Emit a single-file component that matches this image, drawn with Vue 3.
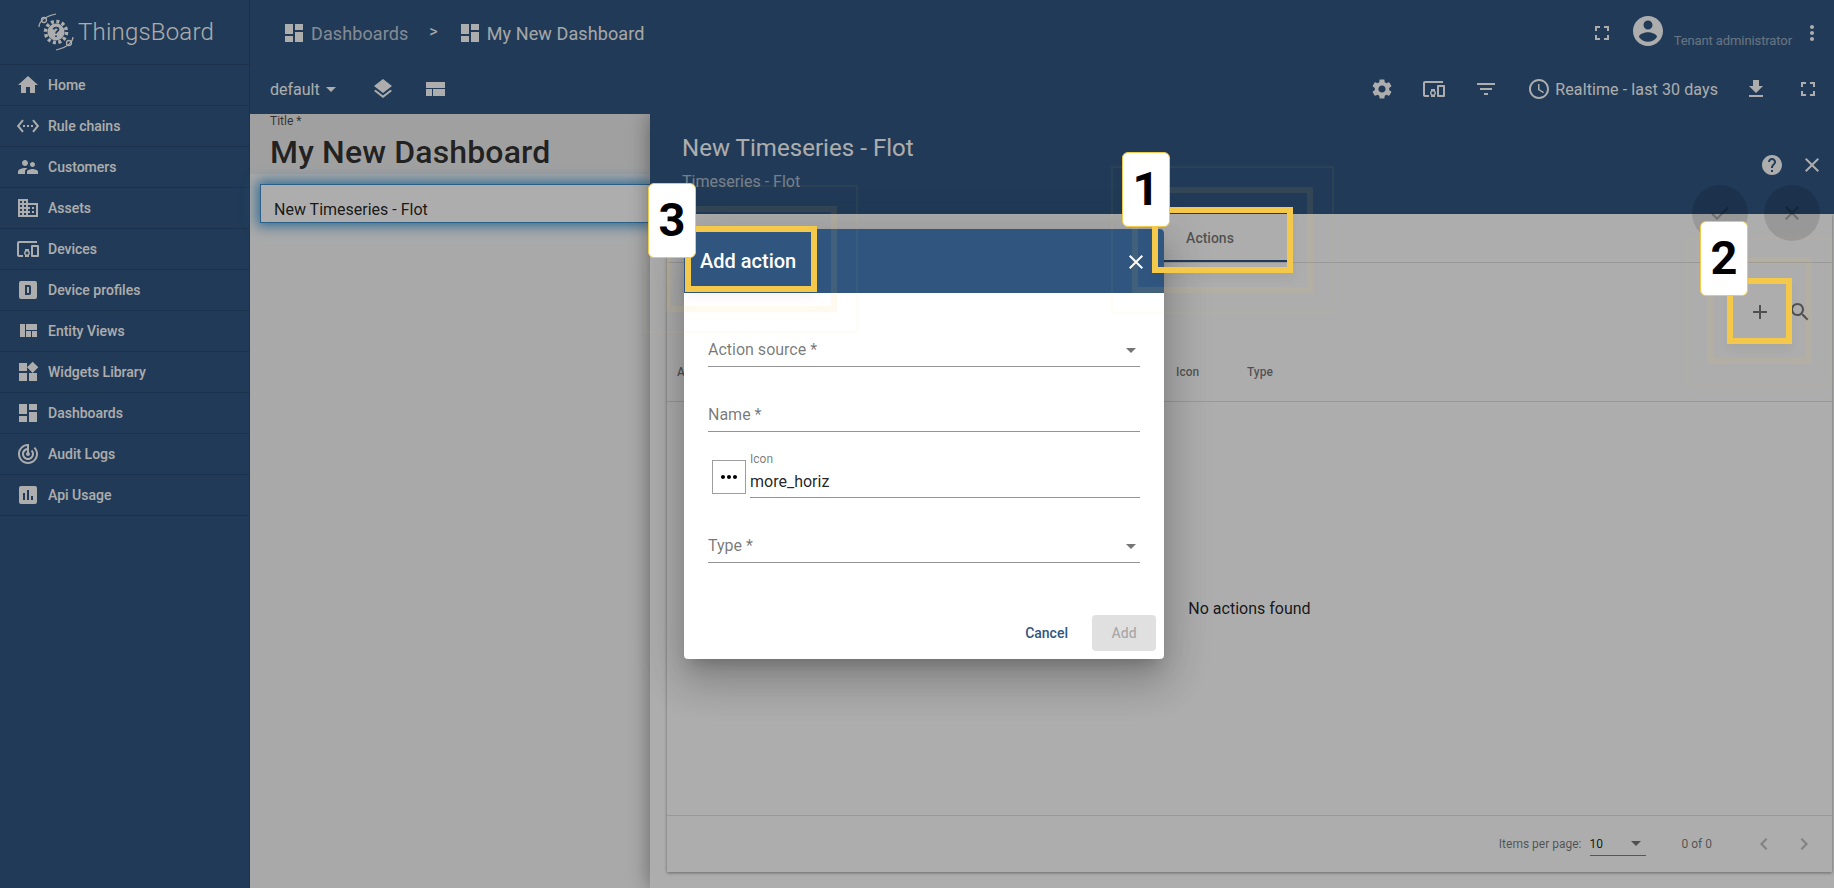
<template>
  <div class="page">
    <aside class="sidebar">
      <div class="logo">
        <svg class="logo__mark" viewBox="0 0 40 40">
          <circle cx="19" cy="20" r="8.5" fill="#fff" />
          <circle cx="19" cy="20" r="10.5" fill="none" stroke="#fff" stroke-width="3.5" stroke-dasharray="3 2.5" />
          <path d="M16.5 17.5c.5-2.5 5-2.5 5 0 0 2-2.500 1.500-2.500 4M19 23.500v1.500" fill="none" stroke="#305680" stroke-width="1.800" />
          <path d="M2 15C2 10 6 5 19 2M36 25c0 4-4 10-17 13" fill="none" stroke="#fff" stroke-width="1.200" />
          <circle cx="7" cy="8" r="2.500" fill="none" stroke="#fff" stroke-width="1.300" />
          <circle cx="32" cy="31" r="2.500" fill="none" stroke="#fff" stroke-width="1.300" />
        </svg>
        <span class="logo__text">ThingsBoard</span>
      </div>
      <a v-for="item in menu" :key="item.label" class="menu-item">
        <svg class="icon" viewBox="0 0 24 24"><path :d="icons[item.icon]" fill-rule="evenodd" /></svg>
        <span>{{ item.label }}</span>
      </a>
    </aside>

    <main class="main">
      <header class="topbar">
        <div class="topbar__row topbar__row--first">
          <svg class="icon" viewBox="0 0 24 24"><path :d="icons.dashboard" /></svg>
          <span class="crumb crumb--dim">Dashboards</span>
          <span class="crumb-sep">&gt;</span>
          <svg class="icon" viewBox="0 0 24 24"><path :d="icons.dashboard" /></svg>
          <span class="crumb">My New Dashboard</span>
          <div class="spacer"></div>
          <svg class="icon" viewBox="0 0 24 24"><path :d="icons.fullscreen" /></svg>
          <svg class="avatar" viewBox="0 0 24 24"><path :d="icons.account" /></svg>
          <span class="user-role">Tenant administrator</span>
          <svg class="icon" viewBox="0 0 24 24"><path :d="icons.moreVert" /></svg>
        </div>
        <div class="topbar__row topbar__row--second">
          <span class="state">default</span>
          <span class="caret caret--light"></span>
          <svg class="icon layers" viewBox="0 0 24 24"><path :d="icons.layers" /></svg>
          <svg class="icon compact" viewBox="0 0 24 24"><path :d="icons.compact" /></svg>
          <div class="spacer"></div>
          <div class="tools">
            <svg class="icon" viewBox="0 0 24 24"><path :d="icons.settings" /></svg>
            <svg class="icon" viewBox="0 0 24 24"><path :d="icons.devices" /></svg>
            <svg class="icon" viewBox="0 0 24 24"><path :d="icons.filter" /></svg>
          </div>
          <svg class="icon clock" viewBox="0 0 24 24"><path :d="icons.schedule" /></svg>
          <span class="timewindow">Realtime - last 30 days</span>
          <svg class="icon download" viewBox="0 0 24 24"><path :d="icons.download" /></svg>
          <svg class="icon" viewBox="0 0 24 24"><path :d="icons.fullscreen" /></svg>
        </div>
      </header>

      <div class="content">
        <section class="canvas">
          <div class="canvas__title">
            <label>Title *</label>
            <h1>My New Dashboard</h1>
          </div>
          <div class="widget">New Timeseries - Flot</div>
        </section>

        <section class="details">
          <div class="details__head">
            <div class="details__titles">
              <h2>New Timeseries - Flot</h2>
              <p>Timeseries - Flot</p>
            </div>
            <svg class="icon" viewBox="0 0 24 24"><path :d="icons.help" /></svg>
            <svg class="icon" viewBox="0 0 24 24"><path :d="icons.close" /></svg>
            <button class="fab fab--apply"><svg viewBox="0 0 24 24"><path :d="icons.check" /></svg></button>
            <button class="fab fab--cancel"><svg viewBox="0 0 24 24"><path :d="icons.close" /></svg></button>
          </div>

          <div class="details__body">
            <div class="card">
              <div class="tabs"><div class="tab">Actions</div></div>
              <div class="table-tools">
                <svg class="icon" viewBox="0 0 24 24"><path :d="icons.add" /></svg>
                <svg class="icon" viewBox="0 0 24 24"><path :d="icons.search" /></svg>
              </div>
              <div class="table-head">
                <span>Action source</span>
                <span>Name</span>
                <span>Icon</span>
                <span>Type</span>
              </div>
              <div class="table-empty">No actions found</div>
              <div class="paginator">
                <span class="paginator__label">Items per page:</span>
                <div class="paginator__select"><span>10</span><i class="caret caret--dark"></i></div>
                <span class="paginator__range">0 of 0</span>
                <svg class="icon" viewBox="0 0 24 24"><path :d="icons.prev" /></svg>
                <svg class="icon" viewBox="0 0 24 24"><path :d="icons.next" /></svg>
              </div>
            </div>
          </div>
        </section>
      </div>
    </main>

    <div class="backdrop"></div>

    <div class="dialog">
      <div class="dialog__head">
        <span>Add action</span>
        <svg class="icon" viewBox="0 0 24 24"><path :d="icons.close" /></svg>
      </div>
      <div class="dialog__body">
        <div class="field"><span>Action source *</span><i class="caret caret--field"></i></div>
        <div class="field"><span>Name *</span></div>
        <div class="icon-row">
          <div class="icon-box"><svg viewBox="0 0 24 24"><path :d="icons.moreHoriz" /></svg></div>
          <div class="icon-input">
            <label>Icon</label>
            <div>more_horiz</div>
          </div>
        </div>
        <div class="field"><span>Type *</span><i class="caret caret--field"></i></div>
      </div>
      <div class="dialog__foot">
        <button class="btn btn--text">Cancel</button>
        <button class="btn btn--disabled">Add</button>
      </div>
    </div>

    <div v-for="mark in marks" :key="mark.n" class="mark" :class="'mark--' + mark.n">
      <div class="mark__label">{{ mark.n }}</div>
    </div>
  </div>
</template>

<script setup>
const icons = {
  home: 'M10 20v-6h4v6h5v-8h3L12 3 2 12h3v8z',
  rules: 'M7.77 6.76L6.23 5.48.82 12l5.41 6.52 1.54-1.28L3.42 12l4.35-5.24zM7 13h2v-2H7v2zm10-2h-2v2h2v-2zm-6 2h2v-2h-2v2zm6.77-7.52l-1.54 1.28L20.58 12l-4.35 5.24 1.54 1.28L23.18 12l-5.41-6.52z',
  people: 'M16.5 12c1.38 0 2.49-1.12 2.49-2.5S17.88 7 16.5 7C15.12 7 14 8.12 14 9.5s1.12 2.5 2.5 2.5zM9 11c1.66 0 2.99-1.34 2.99-3S10.66 5 9 5C7.34 5 6 6.34 6 8s1.34 3 3 3zm7.5 3c-1.83 0-5.5.92-5.5 2.75V19h11v-2.25c0-1.83-3.67-2.75-5.5-2.75zM9 13c-2.33 0-7 1.17-7 3.5V19h7v-2.25c0-.85.33-2.34 2.37-3.47C10.5 13.1 9.66 13 9 13z',
  domain: 'M12 7V3H2v18h20V7H12zM6 19H4v-2h2v2zm0-4H4v-2h2v2zm0-4H4V9h2v2zm0-4H4V5h2v2zm4 12H8v-2h2v2zm0-4H8v-2h2v2zm0-4H8V9h2v2zm0-4H8V5h2v2zm10 12h-8v-2h2v-2h-2v-2h2v-2h-2V9h8v10zm-2-8h-2v2h2v-2zm0 4h-2v2h2v-2z',
  devices: 'M3 6h18V4H3c-1.1 0-2 .9-2 2v12c0 1.1.9 2 2 2h4v-2H3V6zm10 6H9v1.78c-.61.55-1 1.33-1 2.22s.39 1.67 1 2.22V20h4v-1.78c.61-.55 1-1.34 1-2.22s-.39-1.67-1-2.22V12zm-2 5.5c-.83 0-1.5-.67-1.5-1.5s.67-1.5 1.5-1.5 1.5.67 1.5 1.5-.67 1.5-1.5 1.5zM22 8h-6c-.5 0-1 .5-1 1v10c0 .5.5 1 1 1h6c.5 0 1-.5 1-1V9c0-.5-.5-1-1-1zm-1 10h-4v-8h4v8z',
  profile: 'M5 3h14a2 2 0 0 1 2 2v14a2 2 0 0 1-2 2H5a2 2 0 0 1-2-2V5a2 2 0 0 1 2-2zM9 7v10h4a2 2 0 0 0 2-2V9a2 2 0 0 0-2-2H9zm2 2h2v6h-2V9z',
  quilt: 'M10 18h5v-6h-5v6zm-6 0h5V5H4v13zm12 0h5v-6h-5v6zM10 5v6h11V5H10z',
  widgets: 'M13 13v8h8v-8h-8zM3 21h8v-8H3v8zM3 3v8h8V3H3zm13.66-1.31L11 7.34 16.66 13l5.66-5.66-5.66-5.65z',
  dashboard: 'M3 13h8V3H3v10zm0 8h8v-6H3v6zm10 0h8V11h-8v10zm0-18v6h8V3h-8z',
  track: 'M19.07 4.93l-1.41 1.41C19.1 7.79 20 9.79 20 12c0 4.42-3.58 8-8 8s-8-3.58-8-8c0-4.08 3.05-7.44 7-7.93v2.02C8.16 6.57 6 9.03 6 12c0 3.31 2.69 6 6 6s6-2.69 6-6c0-1.66-.67-3.16-1.76-4.24l-1.41 1.41C15.55 9.9 16 10.9 16 12c0 2.21-1.79 4-4 4s-4-1.79-4-4c0-1.86 1.28-3.41 3-3.86v2.14c-.6.35-1 .98-1 1.72 0 1.1.9 2 2 2s2-.9 2-2c0-.74-.4-1.38-1-1.72V2h-1C6.48 2 2 6.48 2 12s4.48 10 10 10 10-4.48 10-10c0-2.76-1.12-5.26-2.93-7.07z',
  assessment: 'M19 3H5c-1.1 0-2 .9-2 2v14c0 1.1.9 2 2 2h14c1.1 0 2-.9 2-2V5c0-1.1-.9-2-2-2zM9 17H7v-7h2v7zm4 0h-2V7h2v10zm4 0h-2v-4h2v4z',
  fullscreen: 'M7 14H5v5h5v-2H7v-3zm-2-4h2V7h3V5H5v5zm12 7h-3v2h5v-5h-2v3zM14 5v2h3v3h2V5h-5z',
  account: 'M12 2C6.48 2 2 6.48 2 12s4.48 10 10 10 10-4.48 10-10S17.52 2 12 2zm0 3c1.66 0 3 1.34 3 3s-1.34 3-3 3-3-1.34-3-3 1.34-3 3-3zm0 14.2c-2.5 0-4.71-1.28-6-3.22.03-1.99 4-3.08 6-3.08 1.99 0 5.97 1.09 6 3.08-1.29 1.94-3.5 3.22-6 3.22z',
  moreVert: 'M12 8c1.1 0 2-.9 2-2s-.9-2-2-2-2 .9-2 2 .9 2 2 2zm0 2c-1.1 0-2 .9-2 2s.9 2 2 2 2-.9 2-2-.9-2-2-2zm0 6c-1.1 0-2 .9-2 2s.9 2 2 2 2-.9 2-2-.9-2-2-2z',
  moreHoriz: 'M6 10c-1.1 0-2 .9-2 2s.9 2 2 2 2-.9 2-2-.9-2-2-2zm12 0c-1.1 0-2 .9-2 2s.9 2 2 2 2-.9 2-2-.9-2-2-2zm-6 0c-1.1 0-2 .9-2 2s.9 2 2 2 2-.9 2-2-.9-2-2-2z',
  layers: 'M11.99 18.54l-7.37-5.73L3 14.07l9 7 9-7-1.63-1.27-7.38 5.74zM12 16l7.36-5.73L21 9l-9-7-9 7 1.63 1.27L12 16z',
  compact: 'M3 19h6v-7H3v7zm7 0h12v-7H10v7zM3 5v6h19V5H3z',
  settings: 'M19.14 12.94c.04-.3.06-.61.06-.94 0-.32-.02-.64-.07-.94l2.03-1.58c.18-.14.23-.41.12-.61l-1.92-3.32c-.12-.22-.37-.29-.59-.22l-2.39.96c-.5-.38-1.03-.7-1.62-.94l-.36-2.54c-.04-.24-.24-.41-.48-.41h-3.84c-.24 0-.43.17-.47.41l-.36 2.54c-.59.24-1.13.57-1.62.94l-2.39-.96c-.22-.08-.47 0-.59.22L2.74 8.87c-.12.21-.08.47.12.61l2.03 1.58c-.05.3-.09.63-.09.94s.02.64.07.94l-2.03 1.58c-.18.14-.23.41-.12.61l1.92 3.32c.12.22.37.29.59.22l2.39-.96c.5.38 1.03.7 1.62.94l.36 2.54c.05.24.24.41.48.41h3.84c.24 0 .44-.17.47-.41l.36-2.54c.59-.24 1.13-.56 1.62-.94l2.39.96c.22.08.47 0 .59-.22l1.92-3.32c.12-.22.07-.47-.12-.61l-2.01-1.58zM12 15.6c-1.98 0-3.6-1.62-3.6-3.6s1.62-3.6 3.6-3.6 3.6 1.62 3.6 3.6-1.62 3.6-3.6 3.6z',
  filter: 'M10 18h4v-2h-4v2zM3 6v2h18V6H3zm3 7h12v-2H6v2z',
  schedule: 'M11.99 2C6.47 2 2 6.48 2 12s4.47 10 9.99 10C17.52 22 22 17.52 22 12S17.52 2 11.99 2zM12 20c-4.42 0-8-3.58-8-8s3.58-8 8-8 8 3.58 8 8-3.58 8-8 8zm.5-13H11v6l5.25 3.15.75-1.23-4.5-2.67z',
  download: 'M19 9h-4V3H9v6H5l7 7 7-7zM5 18v2h14v-2H5z',
  help: 'M12 2C6.48 2 2 6.48 2 12s4.48 10 10 10 10-4.48 10-10S17.52 2 12 2zm1 17h-2v-2h2v2zm2.07-7.75l-.9.92C13.45 12.9 13 13.5 13 15h-2v-.5c0-1.1.45-2.1 1.17-2.83l1.24-1.26c.37-.36.59-.86.59-1.41 0-1.1-.9-2-2-2s-2 .9-2 2H8c0-2.21 1.79-4 4-4s4 1.79 4 4c0 .88-.36 1.68-.93 2.25z',
  close: 'M19 6.41L17.59 5 12 10.59 6.41 5 5 6.41 10.59 12 5 17.59 6.41 19 12 13.41 17.59 19 19 17.59 13.41 12z',
  check: 'M9 16.17L4.83 12l-1.42 1.41L9 19 21 7l-1.41-1.41z',
  add: 'M19 13h-6v6h-2v-6H5v-2h6V5h2v6h6v2z',
  search: 'M15.5 14h-.79l-.28-.27C15.41 12.59 16 11.11 16 9.5 16 5.91 13.09 3 9.5 3S3 5.91 3 9.5 5.91 16 9.5 16c1.61 0 3.09-.59 4.23-1.57l.27.28v.79l5 4.99L20.49 19l-4.99-5zm-6 0C7.01 14 5 11.99 5 9.5S7.01 5 9.5 5 14 7.01 14 9.5 11.99 14 9.5 14z',
  prev: 'M15.41 7.41L14 6l-6 6 6 6 1.41-1.41L10.83 12z',
  next: 'M10 6L8.59 7.41 13.17 12l-4.58 4.59L10 18l6-6z'
}

const menu = [
  { label: 'Home', icon: 'home' },
  { label: 'Rule chains', icon: 'rules' },
  { label: 'Customers', icon: 'people' },
  { label: 'Assets', icon: 'domain' },
  { label: 'Devices', icon: 'devices' },
  { label: 'Device profiles', icon: 'profile' },
  { label: 'Entity Views', icon: 'quilt' },
  { label: 'Widgets Library', icon: 'widgets' },
  { label: 'Dashboards', icon: 'dashboard' },
  { label: 'Audit Logs', icon: 'track' },
  { label: 'Api Usage', icon: 'assessment' }
]

const marks = [{ n: 1 }, { n: 2 }, { n: 3 }]
</script>

<style>
html, body {
  margin: 0;
  overflow: hidden;
}
</style>

<style scoped>
.page {
  position: relative;
  display: flex;
  width: 1834px;
  height: 888px;
  overflow: hidden;
  font-family: Roboto, "Liberation Sans", sans-serif;
  background: #fff;
}
.icon {
  width: 24px;
  height: 24px;
  flex-shrink: 0;
  fill: currentColor;
}
.spacer {
  flex: 1;
}

.sidebar {
  width: 250px;
  flex-shrink: 0;
  box-sizing: border-box;
  background: #305680;
  border-right: 1px solid rgba(0, 0, 0, .12);
  color: #fff;
}
.logo {
  display: flex;
  align-items: center;
  height: 65px;
  box-sizing: border-box;
  padding-left: 37px;
  border-bottom: 1px solid rgba(0, 0, 0, .12);
}
.logo__mark {
  width: 40px;
  height: 40px;
}
.logo__text {
  margin-left: 1px;
  font-size: 24px;
  font-weight: 300;
  letter-spacing: .2px;
}
.menu-item {
  display: flex;
  align-items: center;
  gap: 8px;
  height: 41px;
  box-sizing: border-box;
  padding-left: 16px;
  border-bottom: 1px solid rgba(0, 0, 0, .12);
  font-size: 14px;
  font-weight: 500;
}

.main {
  flex: 1;
  min-width: 0;
  display: flex;
  flex-direction: column;
}
.topbar {
  position: relative;
  z-index: 1;
  background: #305680;
  color: #fff;
  flex-shrink: 0;
}
.topbar__row {
  display: flex;
  align-items: center;
}
.topbar__row--first {
  height: 64px;
  box-sizing: border-box;
  padding: 2px 10px 0 32px;
}
.topbar__row--second {
  height: 50px;
  padding: 0 14px 0 20px;
}
.crumb {
  margin-left: 5px;
  font-size: 18px;
  letter-spacing: .1px;
  opacity: .95;
}
.crumb--dim {
  opacity: .7;
}
.crumb-sep {
  margin: -4px 20px 0 21px;
  font-size: 16px;
}
.avatar {
  width: 36px;
  height: 36px;
  margin: -4px 8px 0 16px;
  fill: currentColor;
}
.user-role {
  margin: 14px 8px 0 0;
  font-size: 13px;
  letter-spacing: -.1px;
  opacity: .5;
}
.state {
  font-size: 16px;
}
.caret {
  display: inline-block;
  width: 0;
  height: 0;
  border-left: 5px solid transparent;
  border-right: 5px solid transparent;
  border-top: 5px solid currentColor;
}
.caret--light {
  margin-left: 6px;
}
.layers {
  margin-left: 35px;
}
.compact {
  margin-left: 28px;
}
.tools {
  display: flex;
  gap: 28px;
}
.clock {
  margin-left: 29px;
}
.timewindow {
  margin-left: 4px;
  font-size: 16px;
  letter-spacing: .1px;
}
.download {
  margin: 0 28px 0 26px;
}

.content {
  flex: 1;
  display: flex;
  min-height: 0;
}
.canvas {
  width: 400px;
  flex-shrink: 0;
  background: #f9f9f9;
}
.canvas__title {
  height: 60px;
  box-sizing: border-box;
  padding: 0 20px;
  background: #ececec;
}
.canvas__title label {
  display: block;
  font-size: 12px;
  line-height: 14px;
  color: rgba(0, 0, 0, .7);
}
.canvas__title h1 {
  margin: 4px 0 0;
  font-size: 32px;
  line-height: 40px;
  font-weight: 500;
  letter-spacing: .15px;
  color: rgba(0, 0, 0, .8);
}
.widget {
  height: 39px;
  box-sizing: border-box;
  margin: 10px 0 0 10px;
  padding: 15px 0 0 13px;
  border: 1px solid #3f8cc8;
  background: #fff;
  box-shadow: 0 0 12px 3px #4b9fd9;
  font-size: 16px;
  line-height: 20px;
  color: rgba(0, 0, 0, .87);
}

.details {
  flex: 1;
  min-width: 0;
  display: flex;
  flex-direction: column;
  background: #fff;
  box-shadow: 0 0 20px rgba(0, 0, 0, .4);
}
.details__head {
  position: relative;
  display: flex;
  height: 100px;
  flex-shrink: 0;
  box-sizing: border-box;
  padding: 39px 10px 0 32px;
  gap: 16px;
  background: #305680;
  color: #fff;
}
.details__titles {
  flex: 1;
  margin-top: -19px;
}
.details__titles h2 {
  margin: 0;
  font-size: 24px;
  line-height: 28px;
  font-weight: 400;
  letter-spacing: .05px;
}
.details__titles p {
  margin: 10px 0 0;
  font-size: 16px;
  line-height: 20px;
  opacity: .6;
}
.fab {
  position: absolute;
  top: 71px;
  width: 56px;
  height: 56px;
  padding: 16px;
  border: 0;
  border-radius: 50%;
  background: rgba(0, 0, 0, .12);
}
.fab svg {
  display: block;
  fill: rgba(0, 0, 0, .26);
}
.fab--apply {
  right: 86px;
}
.fab--cancel {
  right: 14px;
}
.details__body {
  flex: 1;
  min-height: 0;
  padding: 0 2px 16px 17px;
}
.card {
  display: flex;
  flex-direction: column;
  height: 100%;
  background: #fff;
  box-shadow: 0 1px 3px rgba(0, 0, 0, .4);
}
.tabs {
  height: 49px;
  flex-shrink: 0;
  padding-left: 463px;
  border-bottom: 1px solid rgba(0, 0, 0, .12);
  box-sizing: border-box;
}
.tab {
  width: 160px;
  height: 48px;
  box-sizing: border-box;
  padding-top: 16px;
  border-bottom: 2px solid #305680;
  text-align: center;
  font-size: 14px;
  line-height: 17px;
  font-weight: 500;
  color: rgba(0, 0, 0, .55);
}
.table-tools {
  display: flex;
  justify-content: flex-end;
  gap: 16px;
  height: 82px;
  box-sizing: border-box;
  padding: 37px 20px 0 0;
  flex-shrink: 0;
  color: rgba(0, 0, 0, .54);
}
.table-head {
  display: grid;
  grid-template-columns: 250px 249px 71px 1fr;
  align-items: center;
  height: 57px;
  box-sizing: border-box;
  padding: 0 0 3px 10px;
  flex-shrink: 0;
  border-bottom: 1px solid rgba(0, 0, 0, .12);
  font-size: 12px;
  font-weight: 500;
  color: rgba(0, 0, 0, .54);
}
.table-empty {
  flex: 1;
  display: flex;
  align-items: center;
  justify-content: center;
  font-size: 16px;
  color: rgba(0, 0, 0, .87);
}
.paginator {
  display: flex;
  align-items: center;
  height: 57px;
  flex-shrink: 0;
  box-sizing: border-box;
  padding-right: 16px;
  justify-content: flex-end;
  border-top: 1px solid rgba(0, 0, 0, .12);
  font-size: 12px;
  color: rgba(0, 0, 0, .54);
}
.paginator__select {
  display: flex;
  align-items: center;
  justify-content: space-between;
  width: 56px;
  height: 24px;
  box-sizing: border-box;
  margin-left: 8px;
  padding-right: 5px;
  border-bottom: 1px solid rgba(0, 0, 0, .5);
  color: rgba(0, 0, 0, .87);
}
.paginator__range {
  margin: 0 32px 0 36px;
}
.paginator .icon {
  color: rgba(0, 0, 0, .26);
  margin-left: 8px;
}
.paginator .icon + .icon {
  margin-left: 16px;
}
.caret--dark {
  color: rgba(0, 0, 0, .54);
}

.backdrop {
  position: absolute;
  inset: 0;
  background: rgba(0, 0, 0, .32);
  z-index: 2;
}
.dialog {
  position: absolute;
  top: 229px;
  left: 684px;
  z-index: 3;
  display: flex;
  flex-direction: column;
  width: 480px;
  height: 430px;
  overflow: hidden;
  border-radius: 4px;
  background: #fff;
  box-shadow: 0 11px 15px -7px rgba(0, 0, 0, .2), 0 24px 38px 3px rgba(0, 0, 0, .14), 0 9px 46px 8px rgba(0, 0, 0, .12);
}
.dialog__head {
  display: flex;
  align-items: center;
  justify-content: space-between;
  height: 64px;
  flex-shrink: 0;
  box-sizing: border-box;
  padding: 0 16px;
  background: #305680;
  color: #fff;
  font-size: 20px;
  font-weight: 500;
}
.dialog__head .icon {
  margin-top: 2px;
}
.dialog__body {
  flex: 1;
  padding: 8px 24px 0;
}
.field {
  display: flex;
  align-items: flex-end;
  justify-content: space-between;
  height: 65px;
  box-sizing: border-box;
  padding-bottom: 6px;
  border-bottom: 1px solid rgba(0, 0, 0, .42);
  font-size: 16px;
  line-height: 20px;
  color: rgba(0, 0, 0, .54);
}
.field:first-child {
  height: 66px;
}
.field .caret {
  margin: 0 4px 7px 0;
}
.icon-row {
  display: flex;
  align-items: flex-end;
  height: 66px;
  box-sizing: border-box;
  padding-left: 4px;
  gap: 4px;
}
.icon-box {
  width: 34px;
  height: 34px;
  box-sizing: border-box;
  margin-bottom: 4px;
  padding: 4px;
  border: 1px solid rgba(0, 0, 0, .38);
}
.icon-box svg {
  display: block;
  width: 24px;
  height: 24px;
}
.icon-input {
  flex: 1;
  height: 46px;
  box-sizing: border-box;
  border-bottom: 1px solid rgba(0, 0, 0, .42);
}
.icon-input label {
  display: block;
  font-size: 12px;
  line-height: 14px;
  color: rgba(0, 0, 0, .54);
}
.icon-input div {
  margin-top: 6px;
  font-size: 16px;
  line-height: 20px;
  color: rgba(0, 0, 0, .87);
}
.dialog__foot {
  display: flex;
  justify-content: flex-end;
  gap: 8px;
  padding: 8px;
}
.btn {
  height: 36px;
  padding: 0 16px;
  border: 0;
  border-radius: 4px;
  background: transparent;
  font-family: inherit;
  font-size: 14px;
  font-weight: 500;
}
.btn--text {
  color: #305680;
}
.btn--disabled {
  width: 64px;
  background: #e0e0e0;
  color: rgba(0, 0, 0, .26);
}

.mark {
  position: absolute;
  z-index: 4;
  box-sizing: border-box;
  border: 6px solid #f4c84a;
  box-shadow: 0 6px 10px rgba(0, 0, 0, .04);
}
.mark::before,
.mark::after {
  content: "";
  position: absolute;
  pointer-events: none;
}
.mark::before {
  inset: -26px;
  border: 6px solid rgba(244, 200, 74, .09);
}
.mark::after {
  inset: -47px;
  border: 2px solid rgba(244, 200, 74, .05);
}
.mark--1 {
  left: 1152px;
  top: 207px;
  width: 141px;
  height: 66px;
}
.mark--2 {
  left: 1727px;
  top: 278px;
  width: 65px;
  height: 66px;
}
.mark--3 {
  left: 685px;
  top: 226px;
  width: 132px;
  height: 66px;
}
.mark__label {
  position: absolute;
  z-index: 1;
  display: flex;
  align-items: center;
  justify-content: center;
  width: 48px;
  height: 75px;
  box-sizing: border-box;
  padding-bottom: 2px;
  border: 1px solid #f4c84a;
  border-radius: 6px;
  background: #fff;
  color: #000;
  font-size: 47px;
  font-weight: 700;
}
.mark--1 .mark__label {
  left: -36px;
  top: -61px;
}
.mark--2 .mark__label {
  left: -33px;
  top: -63px;
}
.mark--3 .mark__label {
  left: -43px;
  top: -49px;
}
</style>
